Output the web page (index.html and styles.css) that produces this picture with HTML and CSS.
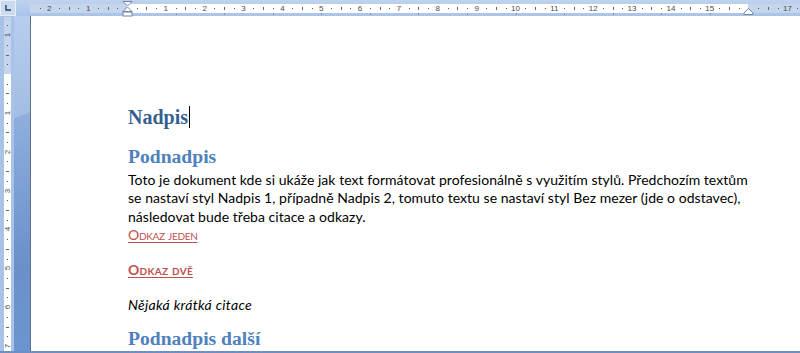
FILE: index.html
```html
<!DOCTYPE html>
<html lang="cs">
<head>
    <meta charset="UTF-8">
    <title>Dokument</title>
    <link rel="stylesheet" href="styles.css">
</head>
<body>
    <div class="window">
        <!-- Top: tab selector + horizontal ruler -->
        <div class="topbar">
            <div class="tab-selector">
                <svg width="8" height="8" viewBox="0 0 8 8"><path d="M2 1v5h5" fill="none" stroke="#2b3e5c" stroke-width="1.4"/></svg>
            </div>
            <div class="hruler-area">
                <div class="hruler" id="hruler">
                    <div class="hr-margin left"></div>
                    <div class="hr-text"></div>
                    <div class="hr-margin right"></div>
                    <svg class="indent-left" width="11" height="16" viewBox="0 0 11 16">
                        <path d="M1 0.5h9l-4.5 4.5z" fill="#fff" stroke="#6f85a6"/>
                        <path d="M5.5 6l4.5 4.5h-9z" fill="#fff" stroke="#6f85a6"/>
                        <rect x="1" y="11" width="9" height="4" fill="#fff" stroke="#6f85a6"/>
                    </svg>
                    <svg class="indent-right" width="11" height="7" viewBox="0 0 11 7">
                        <path d="M5.5 0.5l4.5 4.5v1.5h-9v-1.5z" fill="#fff" stroke="#6f85a6"/>
                    </svg>
                </div>
            </div>
        </div>

        <div class="main">
            <div class="side">
                <div class="vruler-area">
                    <div class="vruler" id="vruler"></div>
                </div>
                <div class="side-panel"></div>
            </div>

            <!-- Page -->
            <div class="page">
                <h1 class="nadpis">Nadpis<span class="cursor"></span></h1>
                <h2 class="podnadpis">Podnadpis</h2>
                <p class="text">Toto je dokument kde si ukáže jak text formátovat profesionálně s využitím stylů. Předchozím textům<br>se nastaví styl Nadpis 1, případně Nadpis 2, tomuto textu se nastaví styl Bez mezer (jde o odstavec),<br>následovat bude třeba citace a odkazy.</p>
                <a class="odkaz" href="#">Odkaz jeden</a>
                <a class="odkaz silny" href="#">Odkaz dvě</a>
                <p class="citace">Nějaká krátká citace</p>
                <h2 class="podnadpis dalsi">Podnadpis další</h2>
            </div>
        </div>

        <div class="status-line"></div>
    </div>

    <script>
        // Ruler ticks, 1 cm = 38.85 px
        const CM = 38.85;

        function addMark(parent, cls, pos, vertical, label) {
            const el = document.createElement("span");
            el.className = cls;
            if (vertical) {
                el.style.top = pos + "px";
            } else {
                el.style.left = pos + "px";
            }
            if (label !== undefined) el.textContent = label;
            parent.appendChild(el);
        }

        const hruler = document.getElementById("hruler");
        const hOrigin = 97;
        for (let q = -12; q <= 72; q++) {
            const x = hOrigin + q * CM / 4;
            if (x < 2 || x > 768) continue;
            if (q % 4 === 0) {
                const n = q / 4;
                if (n === 0 || n === 16) continue;
                addMark(hruler, "num", x, false, Math.abs(n));
            } else if (q % 2 === 0) {
                addMark(hruler, "half", x, false);
            } else {
                addMark(hruler, "dot", x, false);
            }
        }
        // default tab stops every 1.25 cm
        for (let k = 1; k <= 12; k++) {
            addMark(hruler, "tabstop", hOrigin + k * 1.25 * CM, false);
        }

        const vruler = document.getElementById("vruler");
        const vOrigin = 57;
        for (let q = -8; q <= 40; q++) {
            const y = vOrigin + q * CM / 4;
            if (y < 2 || y > 334) continue;
            if (q % 4 === 0) {
                const n = q / 4;
                if (n === 0) continue;
                addMark(vruler, "vnum", y, true, Math.abs(n));
            } else if (q % 2 === 0) {
                addMark(vruler, "vhalf", y, true);
            } else {
                addMark(vruler, "vdot", y, true);
            }
        }
    </script>
</body>
</html>
```

FILE: styles.css
```css
* {
    margin: 0;
    padding: 0;
    box-sizing: border-box;
}

body {
    background-color: #a9c3e8;
    overflow: hidden;
}

.window {
    width: 800px;
    height: 353px;
    display: flex;
    flex-direction: column;
}

/* Top bar with the horizontal ruler */
.topbar {
    height: 16px;
    display: flex;
    background: linear-gradient(#bfd3ee, #a9c3e8);
}

.tab-selector {
    width: 16px;
    height: 16px;
    border: 1px solid #e6eef9;
    background-color: #c9daf1;
    display: flex;
    align-items: center;
    justify-content: center;
}

.hruler-area {
    flex: 1;
    padding: 4px 0 3px 14px;
}

.hruler {
    position: relative;
    height: 9px;
    display: flex;
    font-family: "Liberation Sans", Arial, sans-serif;
}

.hr-margin {
    background-color: #c5d5ec;
}

.hr-margin.left {
    width: 97px;
}

.hr-margin.right {
    flex: 1;
}

.hr-text {
    width: 621px;
    background-color: #fff;
}

.indent-left {
    position: absolute;
    left: 92px;
    top: -3px;
}

.indent-right {
    position: absolute;
    left: 713px;
    top: 4px;
}

.num {
    position: absolute;
    top: 0;
    transform: translateX(-50%);
    font-size: 8px;
    line-height: 9px;
    color: #4b4b4b;
}

.dot {
    position: absolute;
    top: 4px;
    width: 1px;
    height: 1px;
    background-color: #555;
}

.half {
    position: absolute;
    top: 3px;
    width: 1px;
    height: 3px;
    background-color: #666;
}

.tabstop {
    position: absolute;
    top: 9px;
    width: 1px;
    height: 2px;
    background-color: #8a98ae;
}

/* Left side: vertical ruler + panel */
.main {
    flex: 1;
    display: flex;
    min-height: 0;
}

.side {
    width: 31px;
    display: flex;
}

.vruler-area {
    width: 14px;
    padding: 1px 3px 0 4px;
}

.vruler {
    position: relative;
    height: 100%;
    background: linear-gradient(to bottom, #c5d5ec 0 57px, #fff 57px);
    font-family: "Liberation Sans", Arial, sans-serif;
}

.vnum {
    position: absolute;
    left: 0;
    width: 7px;
    text-align: center;
    font-size: 8px;
    line-height: 8px;
    color: #4b4b4b;
    transform: translateY(-50%) rotate(-90deg);
}

.vdot {
    position: absolute;
    left: 3px;
    width: 1px;
    height: 1px;
    background-color: #555;
}

.vhalf {
    position: absolute;
    left: 2px;
    width: 3px;
    height: 1px;
    background-color: #666;
}

.side-panel {
    width: 17px;
    background:
        linear-gradient(160deg, rgba(255, 255, 255, 0.18) 0 30%, rgba(255, 255, 255, 0) 30%),
        linear-gradient(#a8c3ea, #86a7d8 40%, #6a90ca 75%, #6b95d0);
    border-right: 1px solid #5f7088;
}

/* Page content */
.page {
    flex: 1;
    background-color: #fff;
    padding: 89px 0 0 97px;
    white-space: nowrap;
    overflow: hidden;
}

.nadpis,
.podnadpis {
    font-family: "Liberation Serif", "Times New Roman", serif;
    font-weight: bold;
}

.nadpis {
    font-size: 20px;
    line-height: 24px;
    color: #365f91;
}

.cursor {
    display: inline-block;
    width: 1px;
    height: 22px;
    margin-left: 1px;
    background-color: #000;
    vertical-align: -4px;
}

.podnadpis {
    font-size: 19.6px;
    line-height: 22px;
    color: #4f81bd;
    margin-top: 17px;
}

.text,
.odkaz,
.citace {
    font-family: Lato, "Open Sans", sans-serif;
    font-size: 14px;
    line-height: 18.33px;
    letter-spacing: 0.04px;
    color: #000;
}

.text {
    margin-top: 3px;
}

.odkaz {
    display: block;
    width: max-content;
    color: #c0504d;
    font-variant: small-caps;
    letter-spacing: -0.3px;
    text-decoration: underline;
    text-underline-offset: 2px;
}

.odkaz.silny {
    font-weight: bold;
    letter-spacing: 0.3px;
    margin-top: 17px;
}

.citace {
    font-style: italic;
    letter-spacing: 0.3px;
    margin-top: 16px;
}

.podnadpis.dalsi {
    margin-top: 14px;
}

.status-line {
    height: 2px;
    background-color: #6f8fc2;
}
```
